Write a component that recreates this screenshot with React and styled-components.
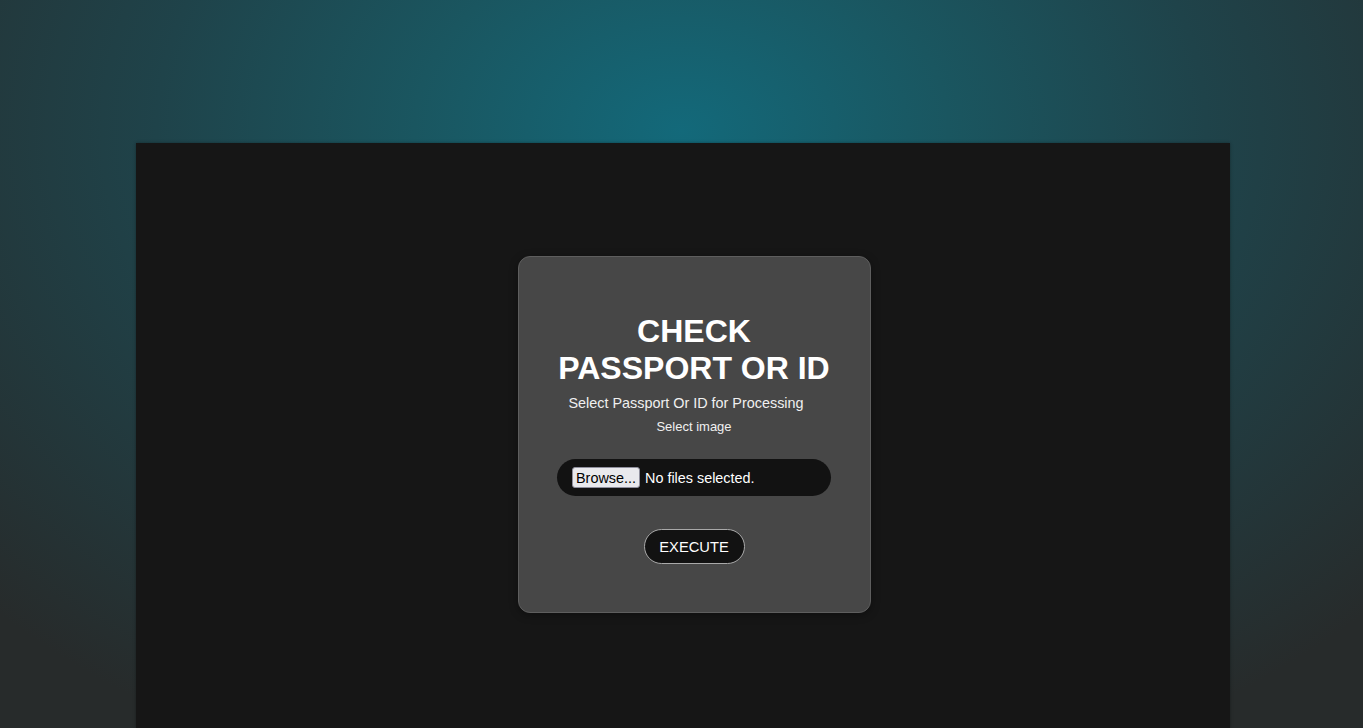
import React from 'react';
import styled, { createGlobalStyle } from 'styled-components';

const GlobalStyle = createGlobalStyle`
    html, body {
        margin: 0;
        padding: 0;
        height: 100%;
    }
    body {
        font-family: 'Liberation Sans', Arial, sans-serif;
        background: #272b2b;
    }
    #root {
        height: 100%;
    }
`;

const Page = styled.div`
    min-height: 100vh;
    display: flex;
    flex-direction: column;
    align-items: center;
    padding-top: 143px;
    box-sizing: border-box;
    background: radial-gradient(ellipse 70% 95% at 50% 18%, #13697a 0%, #1a5660 28%, #1f434a 55%, #272b2b 100%);
`;

const Panel = styled.main`
    flex: 1;
    width: 1094px;
    margin-left: 3px;
    background: #161616;
    box-shadow: 0 0 3px rgba(0, 0, 0, 0.35);
    display: flex;
    justify-content: center;
    align-items: center;
    padding: 0 0 2px 22px;
    box-sizing: border-box;
`;

const Card = styled.section`
    width: 353px;
    height: 357px;
    box-sizing: border-box;
    background: #474747;
    border: 1px solid #5e5e5e;
    border-radius: 12px;
    box-shadow: 0 2px 8px rgba(0, 0, 0, 0.35);
    padding: 56px 20px 0;
    display: flex;
    flex-direction: column;
    align-items: center;
    color: #ffffff;
`;

const Title = styled.h1`
    margin: 0;
    font-size: 32px;
    line-height: 37px;
    font-weight: 700;
    text-align: center;
`;

const Subtitle = styled.p`
    margin: 7px 16px 0 0;
    font-size: 14.4px;
    line-height: 18px;
    white-space: nowrap;
    color: #f0f0f0;
`;

const Label = styled.label`
    margin-top: 7px;
    font-size: 13px;
    line-height: 16px;
    color: #f0f0f0;
`;

const FilePill = styled.label`
    margin-top: 24px;
    width: 274px;
    height: 37px;
    box-sizing: border-box;
    background: #121212;
    border-radius: 19px;
    display: flex;
    align-items: center;
    padding-left: 15px;
    gap: 5px;
    cursor: pointer;
    font-size: 14.4px;

    input {
        display: none;
    }
`;

const BrowseButton = styled.span`
    height: 21px;
    box-sizing: border-box;
    padding: 0 3px;
    background: #e9e9ed;
    color: #000;
    border: 1px solid #8f8f9d;
    border-radius: 3px;
    display: flex;
    align-items: center;
`;

const FileName = styled.span`
    color: #ffffff;
`;

const ExecuteButton = styled.button`
    margin-top: 33px;
    width: 101px;
    height: 35px;
    background: #121212;
    color: #ffffff;
    border: 1px solid #a9a9a9;
    border-radius: 18px;
    font-family: 'Liberation Sans', Arial, sans-serif;
    font-size: 14.7px;
    cursor: pointer;
`;

export default function App() {
    return (
        <>
            <GlobalStyle />
            <Page>
                <Panel>
                    <Card>
                        <Title>CHECK<br />PASSPORT OR ID</Title>
                        <Subtitle>Select Passport Or ID for Processing</Subtitle>
                        <Label htmlFor="doc">Select image</Label>
                        <FilePill>
                            <input id="doc" type="file" accept="image/*" />
                            <BrowseButton>Browse...</BrowseButton>
                            <FileName>No files selected.</FileName>
                        </FilePill>
                        <ExecuteButton type="button">EXECUTE</ExecuteButton>
                    </Card>
                </Panel>
            </Page>
        </>
    );
}
